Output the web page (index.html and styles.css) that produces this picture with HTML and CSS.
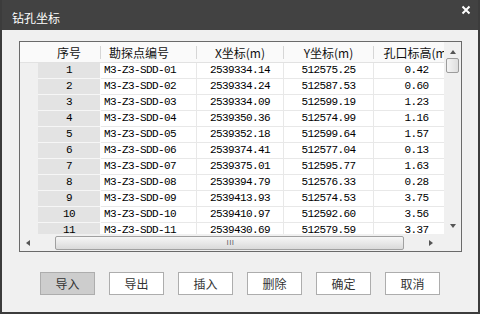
FILE: index.html
```html
<!DOCTYPE html>
<html>
<head>
  <meta charset="utf-8">
  <title>钻孔坐标</title>
  <link rel="stylesheet" href="styles.css">
</head>
<body>
  <div class="window">
    <div class="titlebar">
      <span class="title">钻孔坐标</span>
      <svg class="close" width="10" height="10" viewBox="0 0 10 10">
        <path d="M1.5 1.5 L8.5 8.5 M8.5 1.5 L1.5 8.5" stroke="#fff" stroke-width="2" fill="none"/>
      </svg>
    </div>

    <div class="frame">
      <div class="grid-view">
        <div class="grid">
          <div class="thead">
            <div class="th blank"></div>
            <div class="th">序号</div>
            <div class="th left">勘探点编号</div>
            <div class="th">X坐标(m)</div>
            <div class="th">Y坐标(m)</div>
            <div class="th last">孔口标高(m)</div>
          </div>
          <div class="row"><div class="rh"></div><div class="idx">1</div><div class="td code">M3-Z3-SDD-01</div><div class="td">2539334.14</div><div class="td">512575.25</div><div class="td">0.42</div></div>
          <div class="row"><div class="rh"></div><div class="idx">2</div><div class="td code">M3-Z3-SDD-02</div><div class="td">2539334.24</div><div class="td">512587.53</div><div class="td">0.60</div></div>
          <div class="row"><div class="rh"></div><div class="idx">3</div><div class="td code">M3-Z3-SDD-03</div><div class="td">2539334.09</div><div class="td">512599.19</div><div class="td">1.23</div></div>
          <div class="row"><div class="rh"></div><div class="idx">4</div><div class="td code">M3-Z3-SDD-04</div><div class="td">2539350.36</div><div class="td">512574.99</div><div class="td">1.16</div></div>
          <div class="row"><div class="rh"></div><div class="idx">5</div><div class="td code">M3-Z3-SDD-05</div><div class="td">2539352.18</div><div class="td">512599.64</div><div class="td">1.57</div></div>
          <div class="row"><div class="rh"></div><div class="idx">6</div><div class="td code">M3-Z3-SDD-06</div><div class="td">2539374.41</div><div class="td">512577.04</div><div class="td">0.13</div></div>
          <div class="row"><div class="rh"></div><div class="idx">7</div><div class="td code">M3-Z3-SDD-07</div><div class="td">2539375.01</div><div class="td">512595.77</div><div class="td">1.63</div></div>
          <div class="row"><div class="rh"></div><div class="idx">8</div><div class="td code">M3-Z3-SDD-08</div><div class="td">2539394.79</div><div class="td">512576.33</div><div class="td">0.28</div></div>
          <div class="row"><div class="rh"></div><div class="idx">9</div><div class="td code">M3-Z3-SDD-09</div><div class="td">2539413.93</div><div class="td">512574.53</div><div class="td">3.75</div></div>
          <div class="row"><div class="rh"></div><div class="idx">10</div><div class="td code">M3-Z3-SDD-10</div><div class="td">2539410.97</div><div class="td">512592.60</div><div class="td">3.56</div></div>
          <div class="row"><div class="rh"></div><div class="idx">11</div><div class="td code">M3-Z3-SDD-11</div><div class="td">2539430.69</div><div class="td">512579.59</div><div class="td">3.37</div></div>
        </div>

        <div class="vscroll">
          <div class="arrow up"></div>
          <div class="vthumb"></div>
          <div class="vtrack"></div>
          <div class="arrow down"></div>
        </div>

        <div class="hscroll">
          <div class="arrow left"></div>
          <div class="hthumb"><span class="grip">III</span></div>
          <div class="arrow right"></div>
        </div>

        <div class="corner"></div>
      </div>
    </div>

    <div class="buttons">
      <button class="btn active">导入</button>
      <button class="btn">导出</button>
      <button class="btn">插入</button>
      <button class="btn">删除</button>
      <button class="btn">确定</button>
      <button class="btn">取消</button>
    </div>
  </div>
</body>
</html>
```

FILE: styles.css
```css
body {
  margin: 0;
  padding: 0;
  font-family: "Noto Sans CJK SC", "Liberation Sans", sans-serif;
  background: #424242;
}
.window {
  width: 480px;
  height: 314px;
  box-sizing: border-box;
  border: 2px solid #3c3c3c;
  border-top: none;
  background: #f0f0f0;
  display: flex;
  flex-direction: column;
}
.titlebar {
  height: 30px;
  background: #424242;
  display: flex;
  align-items: center;
  justify-content: space-between;
  padding: 0 7px 0 10px;
  flex-shrink: 0;
}
.title {
  color: #fff;
  font-size: 12px;
  line-height: 12px;
  margin-top: 6px;
}
.close {
  align-self: flex-start;
  margin-top: 5px;
}

/* table frame */
.frame {
  margin: 11px 17px 0;
  width: 443px;
  height: 211px;
  box-sizing: border-box;
  border: 1px solid #6a6a6a;
  background: #f0f0f0;
}
.grid-view {
  display: grid;
  grid-template-columns: 424px 17px;
  grid-template-rows: 192px 17px;
  height: 100%;
}
.grid {
  overflow: hidden;
  background: #f0f0f0;
}
.thead,
.row {
  display: grid;
  grid-template-columns: 18px 63px 96px 87px 90px 86px;
  width: max-content;
}
.thead {
  height: 21px;
  box-sizing: border-box;
  background: #fafafa;
  border-bottom: 1px solid #e2e2e2;
  align-items: center;
}
.th {
  height: 13px;
  line-height: 13px;
  font-size: 12px;
  color: #111;
  text-align: center;
  border-right: 1px solid #d6d6d6;
  white-space: nowrap;
}
.th.blank {
  border-right: none;
}
.th.left {
  text-align: left;
  padding-left: 8px;
}
.th.last {
  border-right: none;
}
.row {
  height: 16px;
  font-family: "Liberation Mono", monospace;
  font-size: 11px;
  letter-spacing: -0.6px;
  color: #000;
}
.row > div {
  box-sizing: border-box;
  line-height: 15px;
  white-space: nowrap;
  overflow: hidden;
}
.rh {
  background: #f0f0f0;
}
.idx {
  background: #e3e3e3;
  border-bottom: 1px solid #f6f6f6;
  border-right: 1px solid #fff;
  text-align: center;
}
.td {
  background: #fff;
  border-bottom: 1px solid #e8e8e8;
  border-right: 1px solid #e8e8e8;
  text-align: center;
}
.td.code {
  text-align: left;
  padding-left: 3px;
}

/* scrollbars */
.vscroll {
  display: flex;
  flex-direction: column;
  align-items: center;
  background: #f0f0f0;
}
.vthumb {
  width: 13px;
  height: 15px;
  box-sizing: border-box;
  border: 1px solid #9c9c9c;
  border-radius: 2px;
  background: linear-gradient(to right, #f4f4f4, #dedede);
}
.vtrack {
  flex: 1;
}
.hscroll {
  display: flex;
  align-items: center;
  background: #f0f0f0;
  padding: 0 7px 0 6px;
}
.hthumb {
  width: 349px;
  height: 14px;
  box-sizing: border-box;
  margin-left: 25px;
  margin-right: 25px;
  border: 1px solid #a0a0a0;
  border-radius: 2px;
  background: linear-gradient(to bottom, #f6f6f6, #dadada);
  display: flex;
  align-items: center;
  justify-content: center;
}
.grip {
  font-family: "Liberation Sans", sans-serif;
  font-size: 8px;
  line-height: 8px;
  color: #666;
  letter-spacing: 0.5px;
  margin-left: 2px;
}
.corner {
  background: #f0f0f0;
}
.arrow {
  width: 0;
  height: 0;
  border: 3px solid transparent;
}
.arrow.up {
  border-bottom: 4px solid #555;
  border-top: none;
  margin: 8px 0 4px;
}
.arrow.down {
  border-top: 4px solid #555;
  border-bottom: none;
  margin: 0 0 6px;
}
.arrow.left {
  border-right: 4px solid #555;
  border-left: none;
}
.arrow.right {
  border-left: 4px solid #555;
  border-right: none;
}

/* bottom buttons */
.buttons {
  display: flex;
  gap: 14px;
  padding: 20px 0 0 38px;
}
.btn {
  width: 55px;
  height: 23px;
  box-sizing: border-box;
  border: 1px solid #adadad;
  background: #fff;
  color: #333;
  font-family: "Noto Sans CJK SC", sans-serif;
  font-size: 12px;
  padding: 0;
}
.btn.active {
  background: #cdcdcd;
}
```
